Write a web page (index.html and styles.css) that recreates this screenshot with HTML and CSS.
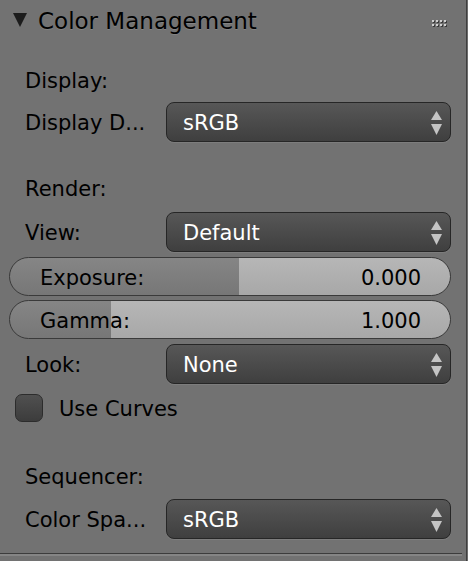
FILE: index.html
```html
<!DOCTYPE html>
<html>
<head>
<meta charset="utf-8">
<link rel="stylesheet" href="styles.css">
</head>
<body>
<div class="panel">
  <div class="header">
    <svg class="tri" width="14" height="14" viewBox="0 0 14 14"><polygon points="0,0 14,0 7,14" fill="#1c1c1c"/></svg>
    <span class="title">Color Management</span>
    <svg class="grip" width="15" height="8" viewBox="0 0 15 8">
      <g fill="#3a3a3a">
        <rect x="1" y="1" width="2" height="2"/><rect x="5" y="1" width="2" height="2"/><rect x="9" y="1" width="2" height="2"/><rect x="13" y="1" width="2" height="2"/>
        <rect x="1" y="5" width="2" height="2"/><rect x="5" y="5" width="2" height="2"/><rect x="9" y="5" width="2" height="2"/><rect x="13" y="5" width="2" height="2"/>
      </g>
      <g fill="#d0d0d0">
        <rect x="0" y="0" width="2" height="2"/><rect x="4" y="0" width="2" height="2"/><rect x="8" y="0" width="2" height="2"/><rect x="12" y="0" width="2" height="2"/>
        <rect x="0" y="4" width="2" height="2"/><rect x="4" y="4" width="2" height="2"/><rect x="8" y="4" width="2" height="2"/><rect x="12" y="4" width="2" height="2"/>
      </g>
    </svg>
  </div>

  <div class="label-row mt15">Display:</div>
  <div class="prop mt2">
    <span class="lbl">Display D...</span>
    <div class="dropdown"><span>sRGB</span>
      <svg class="arrows" width="11" height="24" viewBox="0 0 11 24"><polygon points="5.5,0 11,9 0,9" /><polygon points="0,13 11,13 5.5,24"/></svg>
    </div>
  </div>

  <div class="label-row mt26">Render:</div>
  <div class="prop mt4">
    <span class="lbl">View:</span>
    <div class="dropdown"><span>Default</span>
      <svg class="arrows" width="11" height="24" viewBox="0 0 11 24"><polygon points="5.5,0 11,9 0,9" /><polygon points="0,13 11,13 5.5,24"/></svg>
    </div>
  </div>
  <div class="slider mt5" style="--fill: 52%"><span>Exposure:</span><span>0.000</span></div>
  <div class="slider mt4" style="--fill: 23%"><span>Gamma:</span><span>1.000</span></div>
  <div class="prop mt5">
    <span class="lbl">Look:</span>
    <div class="dropdown"><span>None</span>
      <svg class="arrows" width="11" height="24" viewBox="0 0 11 24"><polygon points="5.5,0 11,9 0,9" /><polygon points="0,13 11,13 5.5,24"/></svg>
    </div>
  </div>
  <div class="check-row mt4"><span class="checkbox"></span><span>Use Curves</span></div>

  <div class="label-row mt28">Sequencer:</div>
  <div class="prop mt3">
    <span class="lbl">Color Spa...</span>
    <div class="dropdown"><span>sRGB</span>
      <svg class="arrows" width="11" height="24" viewBox="0 0 11 24"><polygon points="5.5,0 11,9 0,9" /><polygon points="0,13 11,13 5.5,24"/></svg>
    </div>
  </div>
  <div class="footer-line"></div>
</div>
</body>
</html>
```

FILE: styles.css
```css
html, body {
  margin: 0;
  padding: 0;
  background: #6c6c6c;
}
body {
  font-family: "DejaVu Sans", "Liberation Sans", sans-serif;
  font-size: 21px;
  color: #000;
}
.panel {
  box-sizing: border-box;
  width: 467px;
  height: 561px;
  background: #727272;
  border-right: 1px solid #3f3f3f;
  display: flex;
  flex-direction: column;
}
.header {
  height: 45px;
  display: flex;
  align-items: flex-start;
  flex-shrink: 0;
}
.tri {
  margin: 13px 0 0 13px;
}
.title {
  font-size: 23px;
  margin: 8px 0 0 11px;
  line-height: 27px;
  color: #000;
  text-shadow: 0 1px 0 rgba(255,255,255,0.12);
}
.grip {
  margin: 20px 19px 0 auto;
}
.mt2 { margin-top: 2px; }
.mt3 { margin-top: 3px; }
.mt4 { margin-top: 4px; }
.mt5 { margin-top: 5px; }
.mt15 { margin-top: 15px; }
.mt26 { margin-top: 26px; }
.mt28 { margin-top: 28px; }
.label-row {
  height: 40px;
  line-height: 42px;
  padding-left: 25px;
  flex-shrink: 0;
}
.prop {
  height: 40px;
  display: flex;
  align-items: center;
  flex-shrink: 0;
}
.lbl {
  box-sizing: border-box;
  width: 166px;
  padding-left: 25px;
  padding-top: 2px;
  white-space: nowrap;
}
.dropdown {
  box-sizing: border-box;
  width: 285px;
  height: 40px;
  border: 1px solid #262626;
  border-radius: 8px;
  background: linear-gradient(#575757, #3f3f3f);
  color: #fff;
  display: flex;
  align-items: center;
  justify-content: space-between;
  padding: 2px 8px 0 16px;
  box-shadow: 0 1px 0 rgba(255,255,255,0.08);
}
.arrows {
  fill: #c4c4c4;
  margin-top: -1px;
}
.slider {
  box-sizing: border-box;
  margin-left: 9px;
  width: 442px;
  height: 39px;
  flex-shrink: 0;
  border: 1px solid #3a3a3a;
  border-radius: 20px;
  background:
    linear-gradient(rgba(255,255,255,0.06), rgba(0,0,0,0.06)),
    linear-gradient(to right, #7e7e7e 0, #7e7e7e var(--fill), #b2b2b2 var(--fill), #b2b2b2 100%);
  display: flex;
  align-items: center;
  justify-content: space-between;
  padding: 2px 29px 0 30px;
}
.check-row {
  height: 40px;
  display: flex;
  align-items: center;
  flex-shrink: 0;
}
.check-row span:last-child {
  padding-top: 2px;
}
.checkbox {
  box-sizing: border-box;
  width: 28px;
  height: 28px;
  margin-left: 15px;
  margin-right: 16px;
  border: 1px solid #2c2c2c;
  border-radius: 7px;
  background: linear-gradient(#505050, #3c3c3c);
}
.footer-line {
  margin-top: 14px;
  width: 462px;
  height: 1px;
  background: #3c3c3c;
  border-bottom: 2px solid #858585;
  flex-shrink: 0;
}
```
